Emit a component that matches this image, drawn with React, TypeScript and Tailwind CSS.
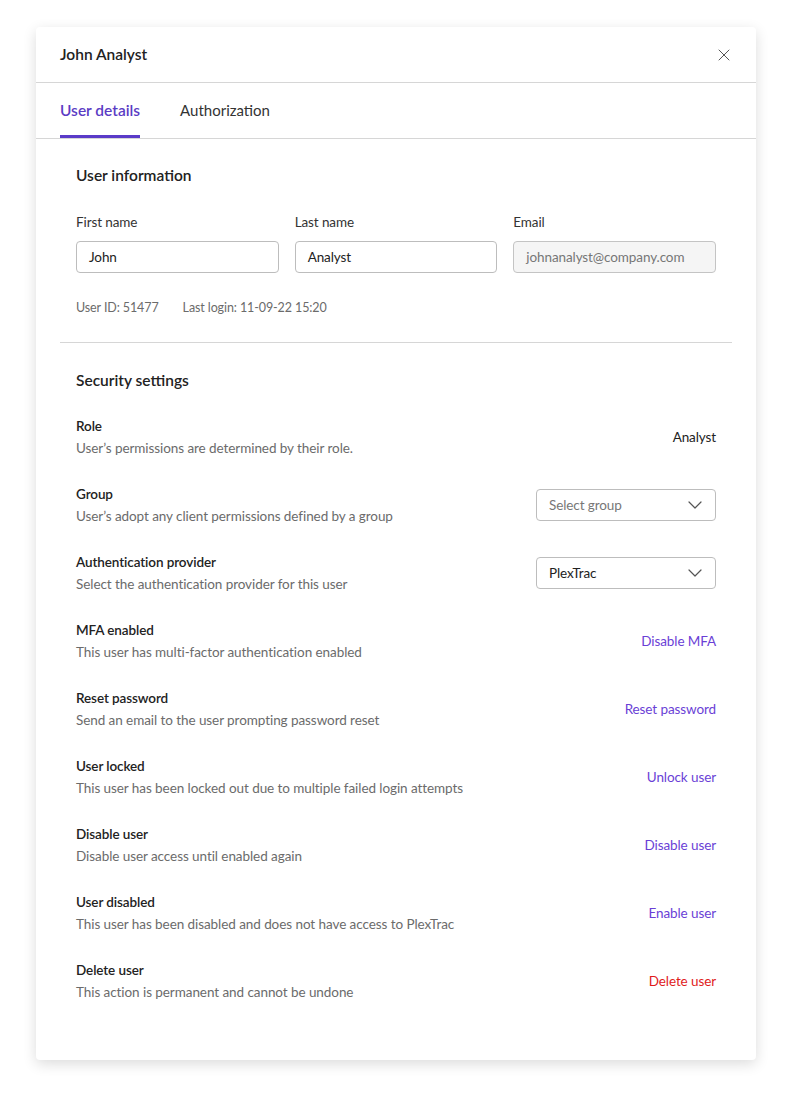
import { X } from 'lucide-react'

type Row = {
  title: string
  desc: string
  kind: 'text' | 'select' | 'link' | 'danger'
  value: string
  placeholder?: boolean
}

const rows: Row[] = [
  { title: 'Role', desc: 'User’s permissions are determined by their role.', kind: 'text', value: 'Analyst' },
  { title: 'Group', desc: 'User’s adopt any client permissions defined by a group', kind: 'select', value: 'Select group', placeholder: true },
  { title: 'Authentication provider', desc: 'Select the authentication provider for this user', kind: 'select', value: 'PlexTrac' },
  { title: 'MFA enabled', desc: 'This user has multi-factor authentication enabled', kind: 'link', value: 'Disable MFA' },
  { title: 'Reset password', desc: 'Send an email to the user prompting password reset', kind: 'link', value: 'Reset password' },
  { title: 'User locked', desc: 'This user has been locked out due to multiple failed login attempts', kind: 'link', value: 'Unlock user' },
  { title: 'Disable user', desc: 'Disable user access until enabled again', kind: 'link', value: 'Disable user' },
  { title: 'User disabled', desc: 'This user has been disabled and does not have access to PlexTrac', kind: 'link', value: 'Enable user' },
  { title: 'Delete user', desc: 'This action is permanent and cannot be undone', kind: 'danger', value: 'Delete user' },
]

function Chevron() {
  return (
    <svg width="14" height="8" viewBox="0 0 14 8" fill="none" className="text-[#555]">
      <path d="M1 1l6 6 6-6" stroke="currentColor" strokeWidth="1.2" strokeLinecap="round" strokeLinejoin="round" />
    </svg>
  )
}

function Field({ label, value, disabled }: { label: string; value: string; disabled?: boolean }) {
  return (
    <div className="flex flex-col">
      <label className="text-[13.5px] tracking-[-0.1px] leading-5 text-[#333]">{label}</label>
      <div
        className={`mt-[9px] h-8 rounded-[4px] border px-3 flex items-center text-[13.5px] tracking-[-0.1px] ${
          disabled ? 'bg-[#f5f5f5] border-[#c4c4c4] text-[#777]' : 'bg-white border-[#bdbdbd] text-[#222]'
        }`}
      >
        {value}
      </div>
    </div>
  )
}

function Control({ row }: { row: Row }) {
  if (row.kind === 'text') return <span className="text-[13.5px] tracking-[-0.1px] text-[#222]">{row.value}</span>
  if (row.kind === 'select')
    return (
      <div className="w-[180px] h-8 rounded-[4px] border border-[#bdbdbd] pl-3 pr-[13px] flex items-center justify-between text-[13.5px] tracking-[-0.1px]">
        <span className={row.placeholder ? 'text-[#777]' : 'text-[#222]'}>{row.value}</span>
        <Chevron />
      </div>
    )
  return (
    <button className={`text-[13.5px] tracking-[-0.1px] ${row.kind === 'danger' ? 'text-[#df1b1b]' : 'text-[#6a3fd6]'}`}>
      {row.value}
    </button>
  )
}

export default function App() {
  return (
    <div className="min-h-screen bg-white pt-[27px] px-9 font-['Lato',sans-serif]">
      <div className="w-[720px] h-[1033px] bg-white rounded-[4px] shadow-[0_4px_14px_rgba(0,0,0,0.14)]">
        {/* Header */}
        <div className="h-[56px] px-6 flex items-center justify-between border-b border-[#d6d6d6]">
          <h1 className="pt-[1px] text-[15.5px] font-semibold text-[#222]">John Analyst</h1>
          <X size={20} strokeWidth={1.2} className="text-[#555] mr-[-2px]" />
        </div>

        {/* Tabs */}
        <div className="h-[56px] px-6 flex gap-[40px] border-b border-[#d6d6d6]">
          <div className="flex items-center border-b-[3px] border-[#5a3bc8] pt-[3px] text-[15.5px] font-semibold text-[#5b3cc4]">
            User details
          </div>
          <div className="flex items-center pt-[3px] border-b-[3px] border-transparent text-[15px] text-[#333]">
            Authorization
          </div>
        </div>

        <div className="px-6">
          {/* User information */}
          <section className="px-4 pt-[26px] pb-[24px] border-b border-[#d6d6d6]">
            <h2 className="text-[15.5px] font-semibold text-[#222] leading-5">User information</h2>
            <div className="mt-[27px] grid grid-cols-3 gap-4">
              <Field label="First name" value="John" />
              <Field label="Last name" value="Analyst" />
              <Field label="Email" value="johnanalyst@company.com" disabled />
            </div>
            <div className="mt-[25px] flex gap-6 text-[12.5px] tracking-[-0.1px] text-[#6b6b6b] leading-5">
              <span>User ID: 51477</span>
              <span>Last login: 11-09-22 15:20</span>
            </div>
          </section>

          {/* Security settings */}
          <section className="px-4 pt-[27px]">
            <h2 className="text-[15.5px] font-semibold text-[#222] leading-5">Security settings</h2>
            <div className="mt-[25px] flex flex-col gap-[24px]">
              {rows.map((r) => (
                <div key={r.title} className="flex items-center justify-between h-[44px]">
                  <div className="flex flex-col">
                    <span className="text-[13.5px] tracking-[-0.1px] font-semibold text-[#222] leading-5">{r.title}</span>
                    <span className="mt-[2px] text-[13.5px] tracking-[-0.07px] text-[#6b6b6b] leading-5">{r.desc}</span>
                  </div>
                  <Control row={r} />
                </div>
              ))}
            </div>
          </section>
        </div>
      </div>
    </div>
  )
}
